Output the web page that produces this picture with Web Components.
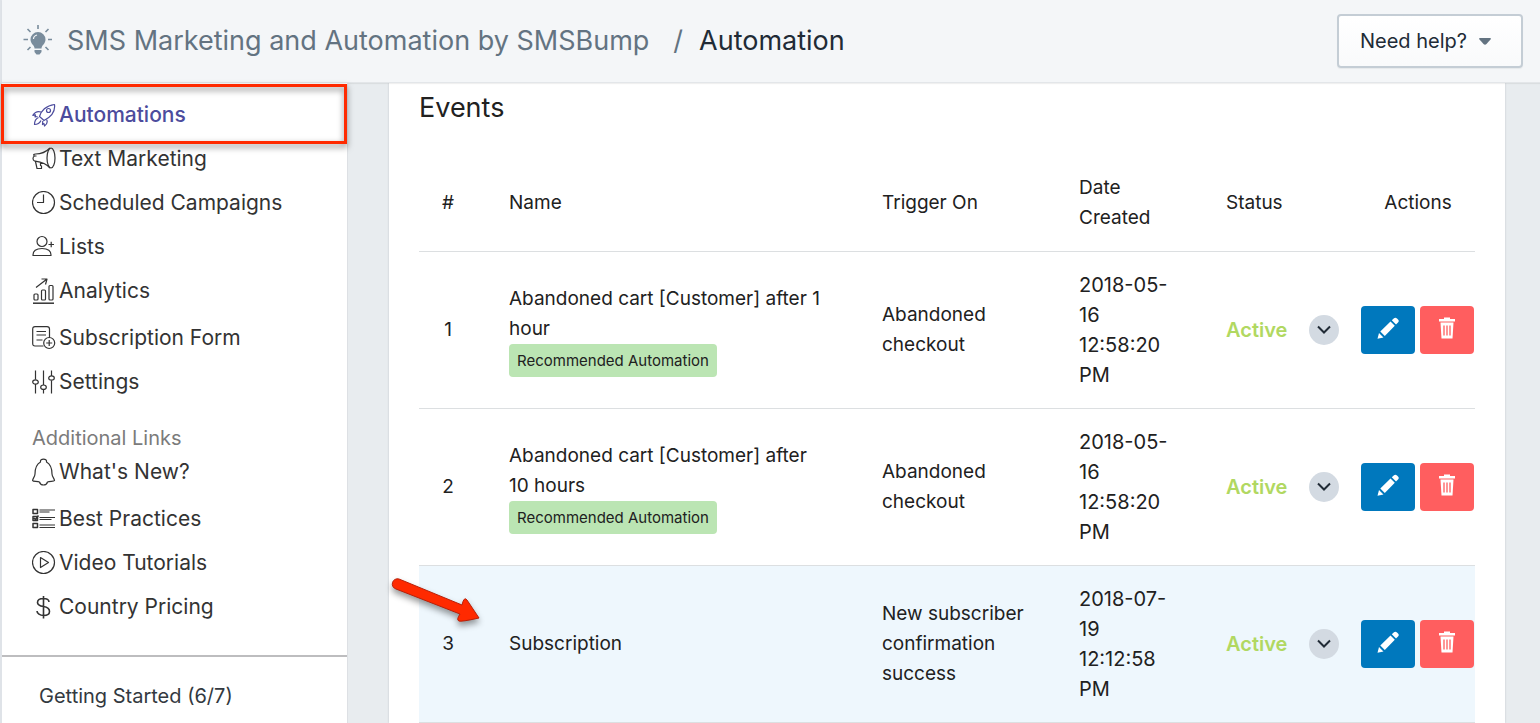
<!DOCTYPE html>
<html lang="en">
<head>
<meta charset="UTF-8">
<meta name="viewport" content="width=device-width, initial-scale=1.0">
<title>Automation</title>
<style>
    body {
        margin: 0;
        height: 100vh;
        overflow: hidden;
        background-color: #e8ecef;
        color: #212121;
        font-family: Inter, "Liberation Sans", sans-serif;
        font-size: 20px;
        line-height: 30px;
    }
</style>
</head>
<body>
<app-shell>
    <app-header slot="header" app="SMS Marketing and Automation by SMSBump" page="Automation"></app-header>
    <side-nav slot="nav">
        <side-link icon="rocket" active>Automations</side-link>
        <side-link icon="megaphone">Text Marketing</side-link>
        <side-link icon="clock">Scheduled Campaigns</side-link>
        <side-link icon="user">Lists</side-link>
        <side-link icon="chart" roomy>Analytics</side-link>
        <side-link icon="form">Subscription Form</side-link>
        <side-link icon="sliders">Settings</side-link>
        <side-link slot="extra" icon="bell" roomy>What's New?</side-link>
        <side-link slot="extra" icon="list">Best Practices</side-link>
        <side-link slot="extra" icon="play">Video Tutorials</side-link>
        <side-link slot="extra" icon="dollar">Country Pricing</side-link>
        <span slot="footer">Getting Started (6/7)</span>
    </side-nav>
    <events-card heading="Events"></events-card>
</app-shell>

<script>
const icons = {
    rocket: `<path d="M7.500 13.500C9 8 14 2.500 22.500 1.500C23.500 9 18 14.500 12 17.500Z"/><circle cx="16.500" cy="7.500" r="2"/><path d="M9 9C5 7.500 3 9 .8 12.300L3.500 11.800L3 14L5.500 13.500M14.500 16.500C16 19 14.500 21.500 12.500 23L12 20.500L10.500 21.500L10.800 18M6.500 14.500C3 16 2.500 18 2.500 21.500C5 21.500 7.500 20.500 9 17.500"/>`,
    megaphone: `<ellipse cx="19" cy="11" rx="4" ry="10"/><path d="M18 1C14 5 9 7 3.500 7C1.500 7 1 8 2.500 9C.5 10 .5 13 2.500 14C6 14.500 13 15 18 21M3.500 14.500L5 21.500H9.500V19L8.500 18.500L8.500 15M2.500 9H4.500"/>`,
    clock: `<circle cx="11.500" cy="11.500" r="11"/><path d="M11.500 3.500V11.500H5"/>`,
    user: `<circle cx="10" cy="6.500" r="5"/><path d="M1 20.500C.8 16 4 13.500 10 13.500S19.200 16 19 20.500ZM16.500 9.500H22M19.200 6.800V12.200"/>`,
    chart: `<path d="M1 25.200H22" stroke-width="1.500"/><rect x="2" y="16" width="4" height="6" rx="1"/><rect x="9.500" y="12" width="4" height="10" rx="1"/><rect x="17" y="7.500" width="4" height="14.500" rx="1"/><path d="M4 9.500L15 1M9.500 1H15L13.500 6.500"/>`,
    form: `<path d="M11.500 20H3Q.7 20 .7 17.500V3Q.7 .7 3 .7H15Q17.500 .7 17.500 3V11.500M4.500 5.500H14M4.500 9H14M4.500 14H10.500"/><circle cx="17.200" cy="17" r="5.500"/><path d="M14.200 17H20.200M17.200 14V20"/>`,
    sliders: `<path d="M3.500 .500V9.500M3.500 14V23.500M11.500 .500V15M11.500 19.500V23.500M19.500 .500V6M19.500 10.500V23.500"/><ellipse cx="3.500" cy="12" rx="2.800" ry="2.200"/><ellipse cx="11.500" cy="17.200" rx="2.800" ry="2.200"/><ellipse cx="19.500" cy="8" rx="2.800" ry="2.200"/>`,
    bell: `<path d="M8.500 4C7.500 .1 15.500 .1 14.500 4C19 6.500 20 10 20 16C20.200 19 22.500 20.500 22.500 22.500C22 23.800 18 23 15.500 24C14.500 28 8.500 28 7.500 24C5 23 1 23.800 .6 22.500C.6 20.500 2.800 19 3 16C3 10 4 6.500 8.500 4Z"/>`,
    list: `<path d="M1 2.500H5.500V6.500H1ZM1 9.500H5.500V13.500H1ZM1 16.500H5.500V20.500H1ZM2 11L3.500 12.500L6.500 8.500" stroke-width="1.500"/><path d="M7.500 3H23M7.500 5H17.500M7.500 10.500H23M7.500 12.500H19.500M7.500 18H23M7.500 20.500H23"/>`,
    play: `<circle cx="11.500" cy="11.500" r="11"/><path d="M8.500 6.500L16.500 11.500L8.500 16.500Z"/>`,
    dollar: `<path d="M17 7C17 5 15 3.500 11.500 3.500S5.500 5 5.500 7.500S8 11 11.500 11.500S17.500 13.500 17.500 16.500S15 20.500 11.500 20.500S5 18.500 5 16M11.500 1V23.500" stroke-width="1.600"/>`
};

class AppShell extends HTMLElement {
    connectedCallback() {
        this.attachShadow({ mode: 'open' });
        this.shadowRoot.innerHTML = `
            <style>
                :host {
                    display: flex;
                    flex-direction: column;
                    height: 100%;
                    border-left: 2px solid #dfe3e8;
                }

                .body {
                    display: flex;
                    flex: 1;
                    min-height: 0;
                }

                main {
                    flex: 1;
                    min-width: 0;
                    padding: 0 35px 0 41px;
                }
            </style>
            <slot name="header"></slot>
            <div class="body">
                <slot name="nav"></slot>
                <main><slot></slot></main>
            </div>
        `;
    }
}

class AppHeader extends HTMLElement {
    connectedCallback() {
        this.attachShadow({ mode: 'open' });
        this.shadowRoot.innerHTML = `
            <style>
                :host {
                    display: block;
                    position: relative;
                    z-index: 2;
                    background-color: #f4f6f8;
                    border-bottom: 1px solid #e3e6e9;
                    box-shadow: 0 1px 1px rgba(0, 0, 0, 0.06);
                }

                header {
                    display: flex;
                    justify-content: space-between;
                    align-items: center;
                    height: 82px;
                    padding: 0 17px 0 18px;
                }

                .crumbs {
                    display: flex;
                    align-items: center;
                    font-size: 27px;
                    color: #637381;
                }

                svg {
                    display: block;
                }

                .crumbs svg {
                    margin-right: 15px;
                }

                a {
                    color: inherit;
                    text-decoration: none;
                }

                .sep {
                    margin: 0 16px 0 24px;
                }

                .page {
                    color: #212b36;
                }

                button {
                    display: flex;
                    align-items: center;
                    gap: 12px;
                    height: 54px;
                    padding: 0 30px 0 21px;
                    border: 2px solid #c4cdd5;
                    border-radius: 4px;
                    background: linear-gradient(#fff, #f9fafb);
                    box-shadow: 0 1px 1px rgba(22, 29, 37, 0.06);
                    color: #212b36;
                    font: inherit;
                }
            </style>
            <header>
                <div class="crumbs">
                    <svg width="32" height="32" viewBox="0 0 32 32" fill="none" stroke="#798c9c" stroke-width="1.600">
                        <path d="M18 0V4M7.500 4L10.500 7M28.500 4L25.500 7M3.500 14.500H8M28 14.500H32.500M7.500 25L10.500 22M28.500 25L25.500 22"/>
                        <path d="M14.500 23.500C14.500 20 10.500 19 10.500 14.500A7.500 7.500 0 0 1 25.500 14.500C25.500 19 21.500 20 21.500 23.500ZM14.500 25H21.500V27L19.500 29.500H16.500L14.500 27Z" fill="#798c9c" stroke="none"/>
                        <path d="M13.500 14Q13.500 11 17 10" stroke="#f4f6f8" stroke-width="1.200"/>
                    </svg>
                    <a href="#">${this.getAttribute('app')}</a>
                    <span class="sep">/</span>
                    <span class="page">${this.getAttribute('page')}</span>
                </div>
                <button type="button">
                    Need help?
                    <svg width="12" height="8" viewBox="0 0 12 8"><path d="M1 1H11Q12.500 1 11.500 2.500L7.500 7Q6 8.500 4.500 7L.5 2.500Q-.5 1 1 1Z" fill="#637381"/></svg>
                </button>
            </header>
        `;
    }
}

class SideNav extends HTMLElement {
    connectedCallback() {
        this.attachShadow({ mode: 'open' });
        this.shadowRoot.innerHTML = `
            <style>
                :host {
                    display: block;
                    position: relative;
                    z-index: 3;
                    flex: 0 0 346px;
                    background-color: #fff;
                    border-right: 1px solid #dde0e4;
                    box-sizing: border-box;
                }

                nav {
                    padding: 10px 0 26px 30px;
                    border-bottom: 2px solid #bdbdbf;
                }

                .label {
                    padding-top: 22px;
                    color: #7b7b7b;
                    line-height: 24px;
                }

                .footer {
                    padding: 24px 37px;
                    color: #333940;
                }
            </style>
            <nav>
                <slot></slot>
                <div class="label">Additional Links</div>
                <slot name="extra"></slot>
            </nav>
            <div class="footer"><slot name="footer"></slot></div>
        `;
    }
}

class SideLink extends HTMLElement {
    connectedCallback() {
        const icon = this.getAttribute('icon');
        const height = icon === 'bell' ? 28 : icon === 'chart' ? 26 : 24;
        this.attachShadow({ mode: 'open' });
        this.shadowRoot.innerHTML = `
            <style>
                :host {
                    display: block;
                    position: relative;
                    color: #333;
                    font-size: 21px;
                }

                :host([roomy]) {
                    margin-bottom: 3px;
                }

                :host([active]) {
                    color: #4c4c9d;
                    font-weight: 500;
                }

                /* highlight frame round the current section */
                :host([active])::after {
                    content: '';
                    position: absolute;
                    inset: -9px 0 -7px -31px;
                    border: 3px solid #ff2a00;
                    filter: drop-shadow(0 3px 3px rgba(0, 0, 0, 0.5));
                    pointer-events: none;
                }

                a {
                    display: flex;
                    align-items: center;
                    gap: 3px;
                    height: 44px;
                    color: inherit;
                    text-decoration: none;
                }

                svg {
                    display: block;
                    flex: none;
                }
            </style>
            <a href="#${icon}">
                <svg width="24" height="${height}" viewBox="0 0 24 ${height}" fill="none" stroke="currentColor" stroke-width="1.200" stroke-linejoin="round">${icons[icon]}</svg>
                <slot></slot>
            </a>
        `;
    }
}

class StatusToggle extends HTMLElement {
    connectedCallback() {
        this.attachShadow({ mode: 'open' });
        this.shadowRoot.innerHTML = `
            <style>
                :host {
                    display: flex;
                    justify-content: space-between;
                    align-items: center;
                    color: #b1d861;
                    font-size: 20px;
                    font-weight: 600;
                }

                button {
                    display: grid;
                    place-items: center;
                    width: 30px;
                    height: 30px;
                    padding: 0;
                    border: 0;
                    border-radius: 50%;
                    background-color: #d3dae2;
                }
            </style>
            <slot></slot>
            <button type="button" aria-label="Change status">
                <svg width="14" height="10" viewBox="0 0 14 10" fill="none" stroke="#212b36" stroke-width="2"><path d="M1 1.500L7 7.500L13 1.500"/></svg>
            </button>
        `;
    }
}

class RowActions extends HTMLElement {
    connectedCallback() {
        this.attachShadow({ mode: 'open' });
        this.shadowRoot.innerHTML = `
            <style>
                :host {
                    display: flex;
                    gap: 5px;
                }

                button {
                    display: grid;
                    place-items: center;
                    width: 54px;
                    height: 48px;
                    padding: 0 0 4px;
                    border: 0;
                    border-radius: 4px;
                    background-color: #0078bd;
                }

                .delete {
                    background-color: #ff5e5f;
                }
            </style>
            <button type="button" aria-label="Edit">
                <svg width="22" height="22" viewBox="0 0 22 22" fill="#fff"><path d="M.5 21.800L2 16L6.500 20.500ZM3.300 14.500L13.500 4.500L17.800 8.800L7.800 19ZM14.800 3.200L17 1.200Q18.500 0 20 1.500L21 2.500Q22.500 4 21 5.500L19 7.500Z"/></svg>
            </button>
            <button type="button" class="delete" aria-label="Delete">
                <svg width="18" height="22" viewBox="0 0 18 22" fill="#fff"><path d="M1 2H6V.5H12V2H17V4.500H1ZM2.500 5.500H15.500L14.500 21.500H3.500Z"/><path d="M6 8.500V18.500M9 8.500V18.500M12 8.500V18.500" stroke="#ff5e5f" stroke-width="1.300"/></svg>
            </button>
        `;
    }
}

class EventsCard extends HTMLElement {
    connectedCallback() {
        const events = [
            { name: 'Abandoned cart [Customer] after 1 hour', recommended: true, trigger: 'Abandoned checkout', date: '2018-05-16 12:58:20 PM' },
            { name: 'Abandoned cart [Customer] after 10 hours', recommended: true, trigger: 'Abandoned checkout', date: '2018-05-16 12:58:20 PM' },
            { name: 'Subscription', trigger: 'New subscriber confirmation success', date: '2018-07-19 12:12:58 PM', picked: true }
        ];

        this.attachShadow({ mode: 'open' });
        this.shadowRoot.innerHTML = `
            <style>
                :host {
                    display: block;
                    min-height: 100%;
                    padding: 5px 30px 0;
                    background-color: #fff;
                    box-shadow: 0 0 2px rgba(33, 43, 54, 0.2);
                    box-sizing: border-box;
                }

                h2 {
                    margin: 0 0 27px;
                    font-size: 27px;
                    font-weight: 400;
                    line-height: 40px;
                }

                table {
                    width: 100%;
                    table-layout: fixed;
                    border-collapse: collapse;
                    font-size: 19px;
                }

                th,
                td {
                    padding: 18px 20px 18px 32px;
                    font-weight: 400;
                    text-align: left;
                    vertical-align: middle;
                }

                td {
                    border-top: 1px solid #dcdfe1;
                    border-bottom: 1px solid #dcdfe1;
                }

                th:first-child,
                td:first-child {
                    padding-left: 0;
                    padding-right: 0;
                    text-align: center;
                }

                th:last-child,
                td:last-child {
                    padding-left: 0;
                    padding-right: 0;
                    text-align: center;
                }

                .date {
                    font-size: 20px;
                }

                .status {
                    padding-right: 22px;
                }

                .picked {
                    background-color: #eef7fd;
                }

                .badge {
                    display: block;
                    width: max-content;
                    padding: 0 8px;
                    border-radius: 4px;
                    background-color: #bbe5b3;
                    font-size: 15px;
                    line-height: 33px;
                }

                .number {
                    position: relative;
                }

                .pointer {
                    position: absolute;
                    left: -30px;
                    top: 8px;
                }
            </style>
            <h2>${this.getAttribute('heading')}</h2>
            <table>
                <colgroup>
                    <col style="width: 58px">
                    <col>
                    <col style="width: 197px">
                    <col style="width: 147px">
                    <col style="width: 167px">
                    <col style="width: 114px">
                </colgroup>
                <thead>
                    <tr>
                        <th>#</th>
                        <th>Name</th>
                        <th>Trigger On</th>
                        <th>Date Created</th>
                        <th>Status</th>
                        <th>Actions</th>
                    </tr>
                </thead>
                <tbody>
                    ${events.map((event, i) => `
                    <tr class="${event.picked ? 'picked' : ''}">
                        <td class="number">${i + 1}${event.picked ? this.pointer() : ''}</td>
                        <td>${event.name}${event.recommended ? '<span class="badge">Recommended Automation</span>' : ''}</td>
                        <td>${event.trigger}</td>
                        <td class="date">${event.date}</td>
                        <td class="status"><status-toggle>Active</status-toggle></td>
                        <td><row-actions></row-actions></td>
                    </tr>`).join('')}
                </tbody>
            </table>
        `;
    }

    // red arrow laid over the picked row
    pointer() {
        return `
            <svg class="pointer" width="100" height="60" viewBox="0 0 100 60" style="filter: drop-shadow(0 4px 3px rgba(0, 0, 0, 0.4))">
                <path d="M10 5L73 31Q75 22 78 26L90 44Q72 48 70 47Q67 46 71 40L7 15A5 5 0 0 1 10 5Z" fill="#ff2a00" stroke="#b81f08" stroke-width="1"/>
            </svg>`;
    }
}

customElements.define('app-shell', AppShell);
customElements.define('app-header', AppHeader);
customElements.define('side-nav', SideNav);
customElements.define('side-link', SideLink);
customElements.define('status-toggle', StatusToggle);
customElements.define('row-actions', RowActions);
customElements.define('events-card', EventsCard);
</script>
</body>
</html>
